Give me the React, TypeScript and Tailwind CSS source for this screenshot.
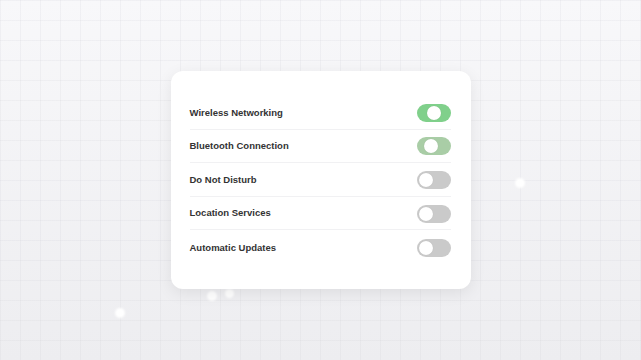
const settings = [
  { label: "Wireless Networking", track: "bg-[#80d08b]", knob: "ml-[10px]" },
  { label: "Bluetooth Connection", track: "bg-[#a9cda6]", knob: "ml-[7px]" },
  { label: "Do Not Disturb", track: "bg-[#cacaca]", knob: "ml-[2px]" },
  { label: "Location Services", track: "bg-[#cacaca]", knob: "ml-[2px]" },
  { label: "Automatic Updates", track: "bg-[#cacaca]", knob: "ml-[2px]" },
];

function Toggle({ track, knob }: { track: string; knob: string }) {
  return (
    <div className={`flex h-[18px] w-[34px] items-center rounded-full ${track}`}>
      <div className={`h-[14px] w-[14px] rounded-full bg-white shadow-[0_0_1px_rgba(0,0,0,0.15)] ${knob}`} />
    </div>
  );
}

export default function App() {
  return (
    <div
      className="relative flex h-[360px] w-[641px] items-start justify-center overflow-hidden bg-[linear-gradient(to_bottom,#f8f8fa,#ededf0)] pt-[71px]"
      style={{ fontFamily: '"Liberation Sans", Arial, sans-serif' }}
    >
      {/* faint grid */}
      <div className="pointer-events-none absolute inset-0 bg-[linear-gradient(to_right,rgba(200,200,210,0.16)_1px,transparent_1px),linear-gradient(to_bottom,rgba(200,200,210,0.16)_1px,transparent_1px)] bg-[size:20px_20px]" />

      {/* floating dots */}
      <div className="pointer-events-none absolute left-[515px] top-[178px] h-[10px] w-[10px] rounded-full bg-white blur-[1px]" />
      <div className="pointer-events-none absolute left-[207px] top-[291px] h-[10px] w-[10px] rounded-full bg-white blur-[1px]" />
      <div className="pointer-events-none absolute left-[225px] top-[289px] h-[9px] w-[9px] rounded-full bg-white blur-[1px]" />
      <div className="pointer-events-none absolute left-[115px] top-[308px] h-[10px] w-[10px] rounded-full bg-white blur-[1px]" />

      <div className="relative w-[300px] rounded-xl bg-white py-[25px] pl-[19px] pr-[20px] shadow-[0_4px_16px_rgba(0,0,0,0.08)]">
        {settings.map((s, i) => (
          <div
            key={s.label}
            className={`flex h-[33.6px] items-center justify-between pt-px ${
              i < settings.length - 1 ? "border-b border-[#f1f1f3]" : ""
            }`}
          >
            <span className="text-[9.5px] font-bold text-[#333333]">{s.label}</span>
            <Toggle track={s.track} knob={s.knob} />
          </div>
        ))}
      </div>
    </div>
  );
}
